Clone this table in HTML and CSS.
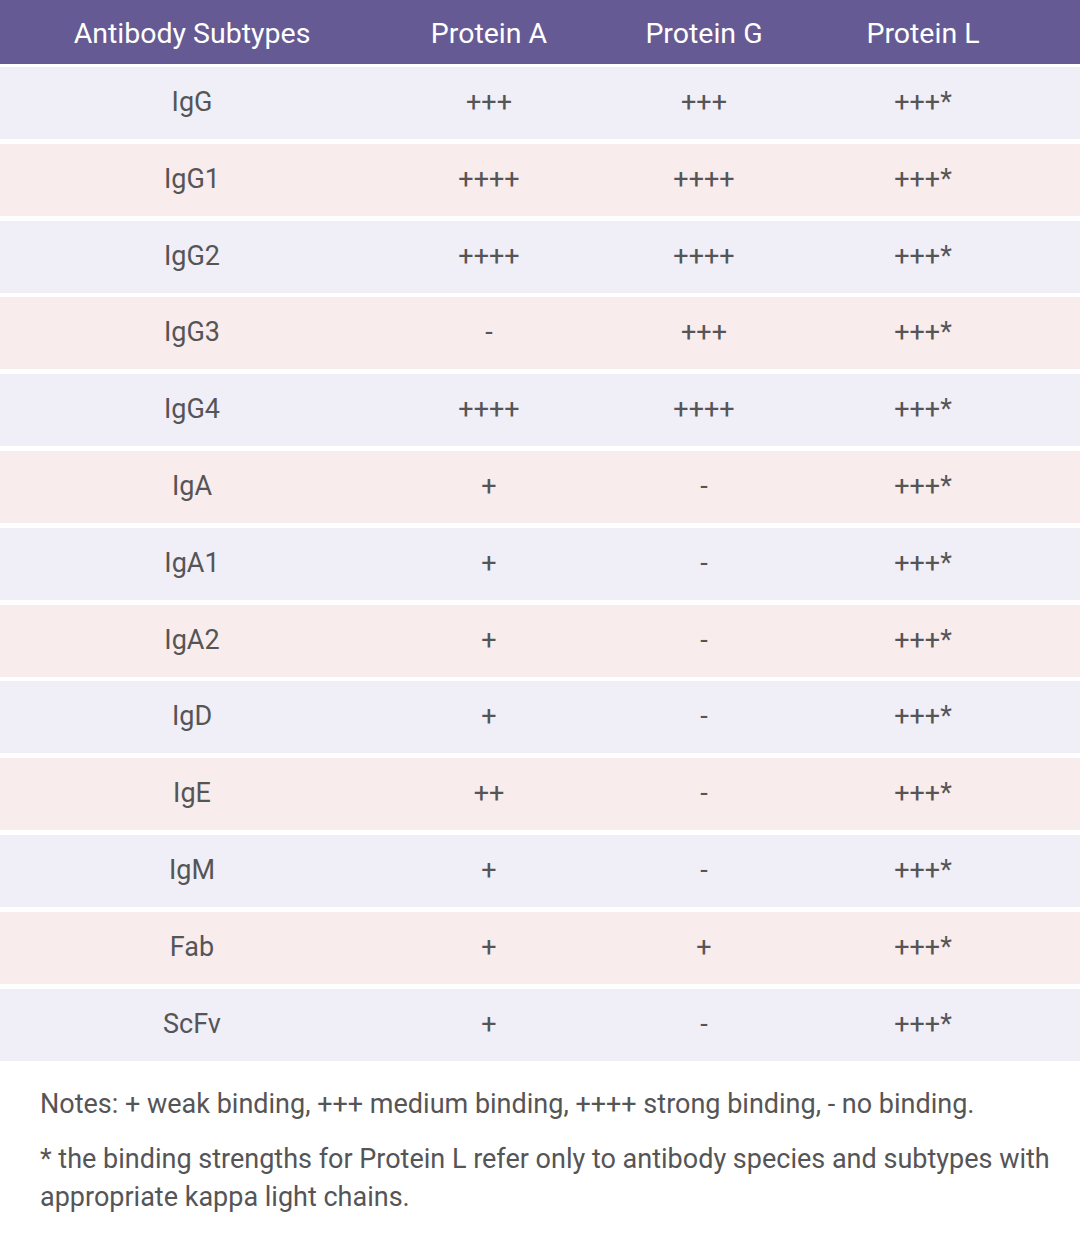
FILE: index.html
```html
<!DOCTYPE html>
<html>
<head>
<meta charset="utf-8">
<link rel="stylesheet" href="styles.css">
</head>
<body>
<div class="table">
  <div class="row head">
    <div>Antibody Subtypes</div><div>Protein A</div><div>Protein G</div><div>Protein L</div>
  </div>
  <div class="row lav"><div>IgG</div><div>+++</div><div>+++</div><div>+++*</div></div>
  <div class="row pink"><div>IgG1</div><div>++++</div><div>++++</div><div>+++*</div></div>
  <div class="row lav"><div>IgG2</div><div>++++</div><div>++++</div><div>+++*</div></div>
  <div class="row pink"><div>IgG3</div><div>-</div><div>+++</div><div>+++*</div></div>
  <div class="row lav"><div>IgG4</div><div>++++</div><div>++++</div><div>+++*</div></div>
  <div class="row pink"><div>IgA</div><div>+</div><div>-</div><div>+++*</div></div>
  <div class="row lav"><div>IgA1</div><div>+</div><div>-</div><div>+++*</div></div>
  <div class="row pink"><div>IgA2</div><div>+</div><div>-</div><div>+++*</div></div>
  <div class="row lav"><div>IgD</div><div>+</div><div>-</div><div>+++*</div></div>
  <div class="row pink"><div>IgE</div><div>++</div><div>-</div><div>+++*</div></div>
  <div class="row lav"><div>IgM</div><div>+</div><div>-</div><div>+++*</div></div>
  <div class="row pink"><div>Fab</div><div>+</div><div>+</div><div>+++*</div></div>
  <div class="row lav"><div>ScFv</div><div>+</div><div>-</div><div>+++*</div></div>
</div>
<div class="notes">
  <p>Notes: + weak binding, +++ medium binding, ++++ strong binding, - no binding.</p>
  <p>* the binding strengths for Protein L refer only to antibody species and subtypes with appropriate kappa light chains.</p>
</div>
</body>
</html>
```
FILE: styles.css
```css
html, body {
  margin: 0;
  padding: 0;
  background: #ffffff;
}
body {
  font-family: Roboto, "Liberation Sans", sans-serif;
  color: #555557;
}
.table {
  display: flex;
  flex-direction: column;
  gap: 4.8px;
}
.row {
  display: grid;
  grid-template-columns: 384px 210px 220px 218px;
  height: 72px;
  align-items: center;
  font-size: 27px;
}
.row > div {
  text-align: center;
}
.head {
  height: 64px;
  background: #665a94;
  color: #ffffff;
  margin-bottom: -1.8px;
  font-size: 28.5px;
}
.head > div {
  padding-top: 3px;
}
.lav {
  background: #f0eef6;
}
.pink {
  background: #f8ecec;
}
.row:not(.head) > div {
  padding-bottom: 2px;
}
.notes {
  padding: 24px 20px 0 40px;
  font-size: 27px;
  line-height: 38px;
}
.notes p {
  margin: 0 0 17px 0;
}
```
